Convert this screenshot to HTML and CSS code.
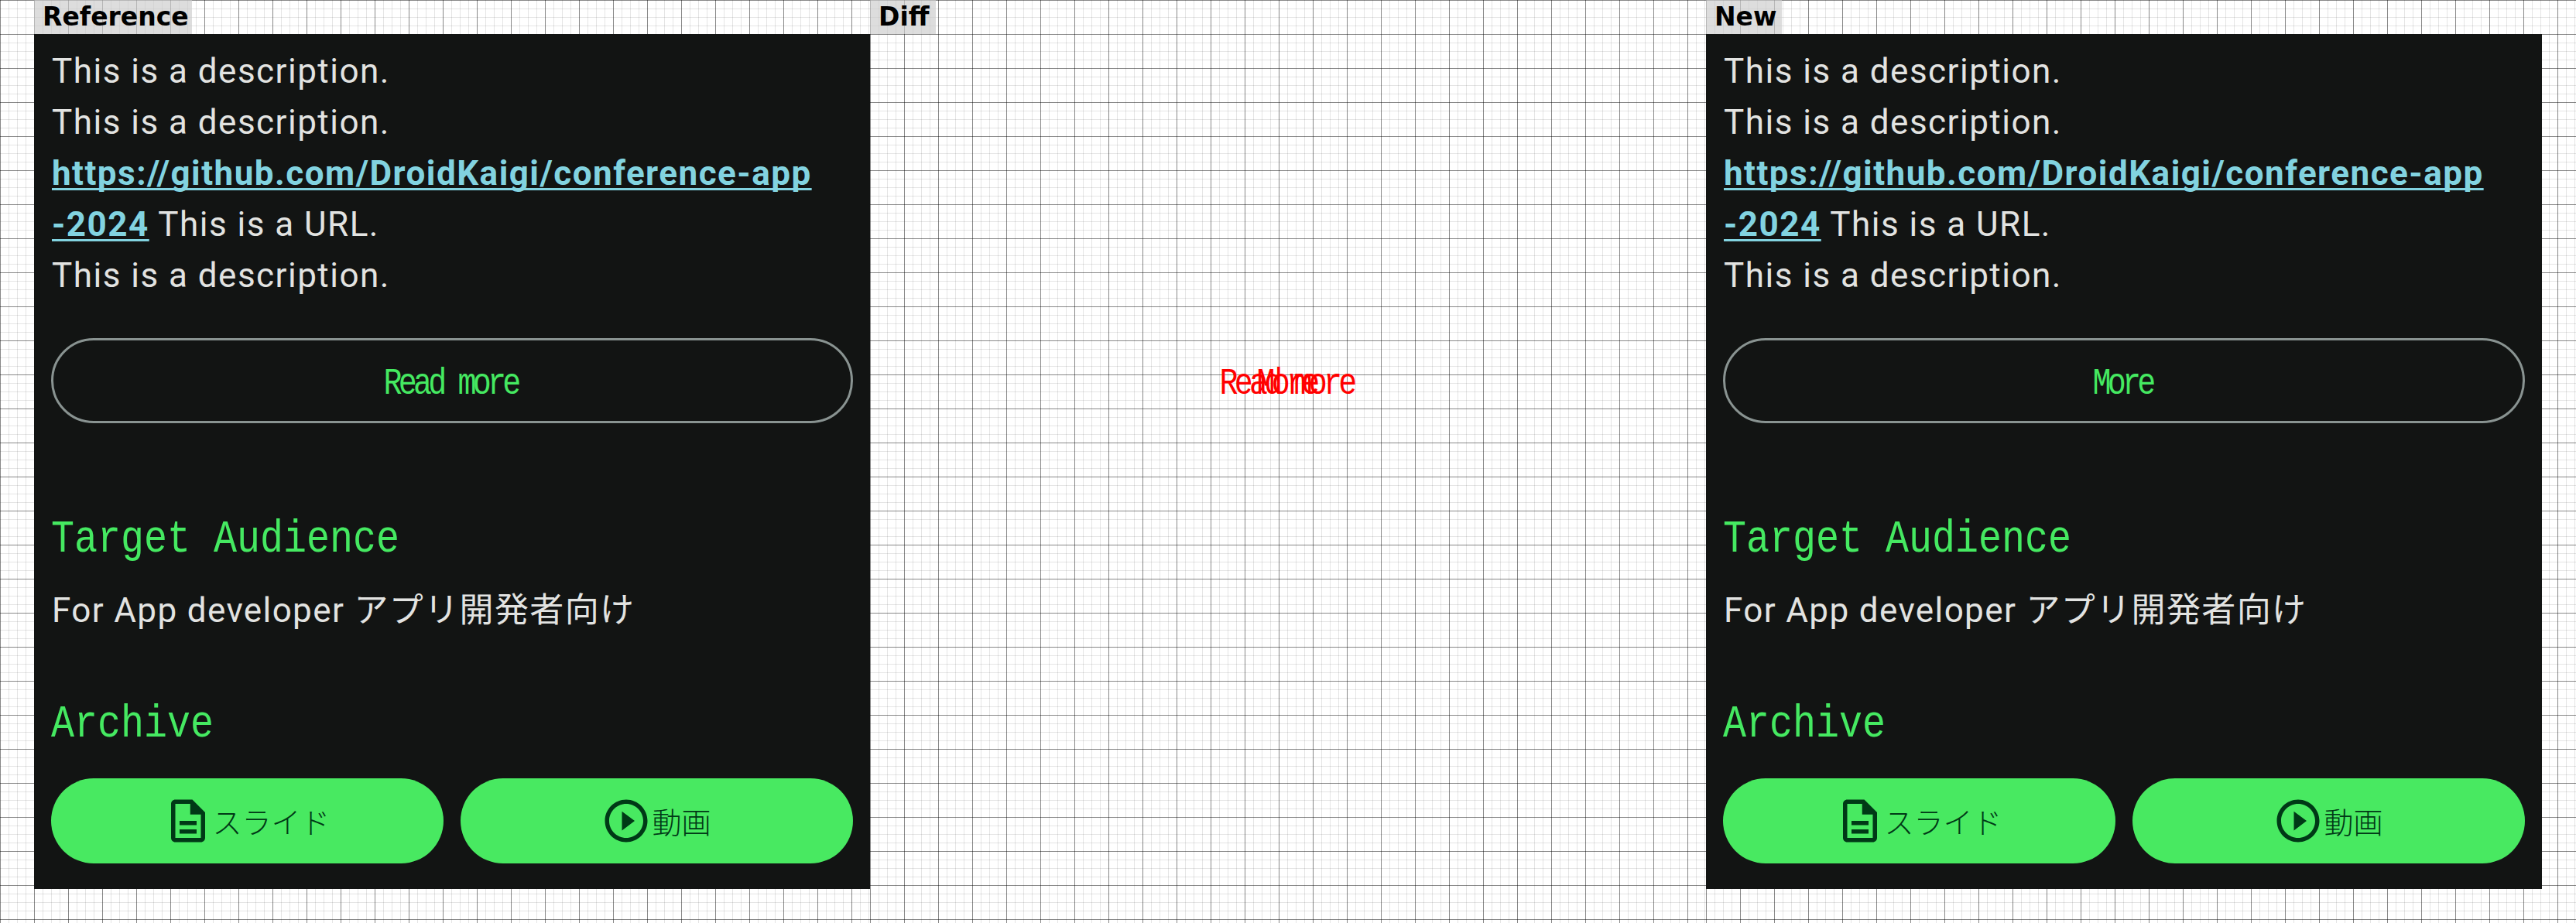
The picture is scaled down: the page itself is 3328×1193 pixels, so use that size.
FILE: index.html
```
<!DOCTYPE html>
<html lang="ja">
<head>
<meta charset="utf-8">
<title>Screenshot comparison</title>
<link rel="stylesheet" href="styles.css">
</head>
<body>
<main class="board">
  <div class="gutter"></div>
  <section class="column">
    <h2 class="tag tag-reference">Reference</h2>
    <article class="screen">
      <p class="text description">This is a description.<br>This is a description.<br><a class="link">https://github.com/DroidKaigi/conference-app<br>-2024</a> This is a URL.<br>This is a description.</p>
      <div class="outline-button"><span class="pixel read-more">Read more</span></div>
      <h3 class="pixel heading audience">Target Audience</h3>
      <p class="text target">For App developer アプリ開発者向け</p>
      <h3 class="pixel heading archive">Archive</h3>
      <div class="actions">
        <div class="button"><svg class="icon" viewBox="0 0 24 24"><path d="M8 16h8v2H8zm0-4h8v2H8zm6-10H6c-1.100 0-2 .9-2 2v16c0 1.100.89 2 1.990 2H18c1.100 0 2-.9 2-2V8zm4 18H6V4h7v5h5z"/></svg><span class="slide">スライド</span></div>
        <div class="button"><svg class="icon" viewBox="0 0 24 24"><path d="M10 16.500l6-4.500-6-4.500zM12 2C6.480 2 2 6.480 2 12s4.480 10 10 10 10-4.480 10-10S17.520 2 12 2zm0 18c-4.410 0-8-3.590-8-8s3.590-8 8-8 8 3.590 8 8-3.590 8-8 8z"/></svg><span class="video">動画</span></div>
      </div>
    </article>
  </section>
  <section class="column">
    <h2 class="tag tag-diff">Diff</h2>
    <div class="overlap"><span class="pixel read-more">Read more</span><span class="pixel more">More</span></div>
  </section>
  <section class="column">
    <h2 class="tag tag-new">New</h2>
    <article class="screen">
      <p class="text description">This is a description.<br>This is a description.<br><a class="link">https://github.com/DroidKaigi/conference-app<br>-2024</a> This is a URL.<br>This is a description.</p>
      <div class="outline-button"><span class="pixel more">More</span></div>
      <h3 class="pixel heading audience">Target Audience</h3>
      <p class="text target">For App developer アプリ開発者向け</p>
      <h3 class="pixel heading archive">Archive</h3>
      <div class="actions">
        <div class="button"><svg class="icon" viewBox="0 0 24 24"><path d="M8 16h8v2H8zm0-4h8v2H8zm6-10H6c-1.100 0-2 .9-2 2v16c0 1.100.89 2 1.990 2H18c1.100 0 2-.9 2-2V8zm4 18H6V4h7v5h5z"/></svg><span class="slide">スライド</span></div>
        <div class="button"><svg class="icon" viewBox="0 0 24 24"><path d="M10 16.500l6-4.500-6-4.500zM12 2C6.480 2 2 6.480 2 12s4.480 10 10 10 10-4.480 10-10S17.520 2 12 2zm0 18c-4.410 0-8-3.590-8-8s3.590-8 8-8 8 3.590 8 8-3.590 8-8 8z"/></svg><span class="video">動画</span></div>
      </div>
    </article>
  </section>
  <div class="gutter gutter-end"></div>
</main>
</body>
</html>
```
FILE: styles.css
```
* { box-sizing: border-box; margin: 0; padding: 0; }
body { background: #fff; }
.board { display: grid; grid-template-columns: 44px 1080px 1080px 1080px 44px; height: 1193px; overflow: hidden; }
.gutter, .column {
  background-image:
    linear-gradient(to right, rgba(0,0,0,.4) 1px, transparent 1px),
    linear-gradient(to bottom, rgba(0,0,0,.4) 1px, transparent 1px),
    linear-gradient(to right, rgba(0,0,0,.1) 1px, transparent 1px),
    linear-gradient(to bottom, rgba(0,0,0,.1) 1px, transparent 1px);
  background-size: 44px 44px, 44px 44px, 11px 11px, 11px 11px;
}
.gutter-end { background-position: 20px 0; }
.column { display: flex; flex-direction: column; align-items: flex-start; }
.tag { height: 44px; padding-left: 11px; background: rgba(204,204,204,.667); font: bold 33px/43px "DejaVu Sans", sans-serif; color: #000; white-space: nowrap; }
.tag-reference { width: 204px; }
.tag-diff { width: 85px; }
.tag-new { width: 98px; }
.screen { display: flex; flex-direction: column; width: 1080px; height: 1105px; padding: 15px 22px 33px; background: #121413; }
.text { font: 44px/66px Roboto, "Noto Sans CJK JP", sans-serif; letter-spacing: 1.375px; color: #e2e3e1; white-space: nowrap; }
.description { height: 378px; padding-left: 1px; letter-spacing: 1.480px; }
.link { font-weight: 700; color: #82d3e0; text-decoration: underline; text-decoration-thickness: 3px; text-underline-offset: 4px; text-decoration-skip-ink: none; }
.outline-button { display: flex; align-items: center; justify-content: center; height: 110px; border: 3px solid #899391; border-radius: 55px; padding: 10px 4px 0 0; }
.pixel { font-family: "Liberation Mono", monospace; font-weight: 400; color: #45e961; white-space: nowrap; }
.read-more, .more { display: block; font-size: 40px; line-height: 60px; letter-spacing: -4.800px; transform: scaleY(1.200); }
.heading { font-size: 50px; line-height: 66px; transform-origin: left center; transform: scaleY(1.200); }
.audience { margin-top: 117px; }
.target { margin-top: 26px; padding-left: 1px; }
.archive { margin-top: 81px; }
.actions { display: grid; grid-template-columns: 1fr 1fr; gap: 22px; margin-top: auto; }
.button { display: flex; align-items: center; justify-content: center; height: 110px; padding-right: 2px; border-radius: 55px; background: #48e961; color: #003916; font: 300 38px/60px "Noto Sans CJK JP", sans-serif; }
.slide { margin-left: -2px; }
.icon { width: 66px; height: 66px; fill: #003916; }
.overlap { display: grid; width: 1080px; margin-top: 423px; padding-right: 4px; justify-items: center; }
.overlap .pixel { grid-area: 1 / 1; color: #f00; }
```
